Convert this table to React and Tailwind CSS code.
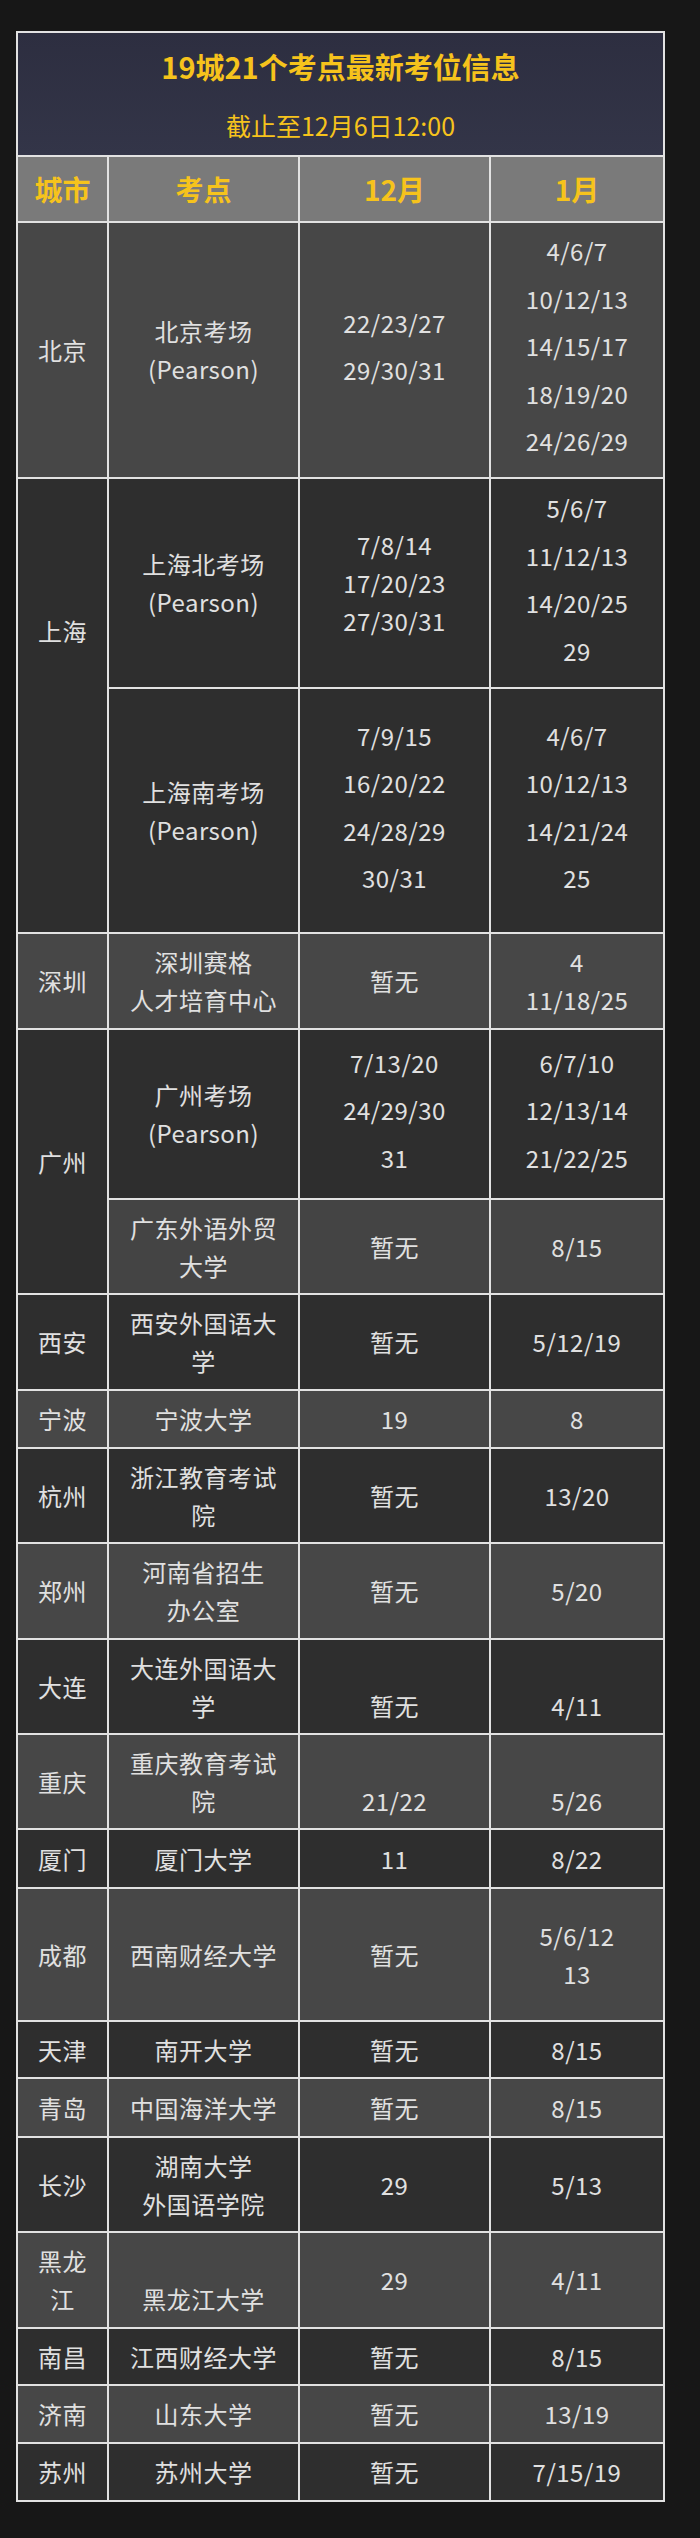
import React from "react";

const DARK = "bg-[#2e2e2e]";
const LIGHT = "bg-[#474747]";

// 每行: city (可选, 带 span), site / dec / jan 为多行文字
const rows = [
  {
    city: { lines: ["北京"], span: false },
    bg: LIGHT,
    site: ["北京考场", "(Pearson)"],
    dec: ["22/23/27", "29/30/31"],
    jan: ["4/6/7", "10/12/13", "14/15/17", "18/19/20", "24/26/29"],
    tall: true,
  },
  {
    city: { lines: ["上海"], span: true, top: true },
    bg: DARK,
    site: ["上海北考场", "(Pearson)"],
    dec: ["7/8/14", "17/20/23", "27/30/31"],
    jan: ["5/6/7", "11/12/13", "14/20/25", "29"],
    tallJan: true,
  },
  {
    bg: DARK,
    site: ["上海南考场", "(Pearson)"],
    dec: ["7/9/15", "16/20/22", "24/28/29", "30/31"],
    jan: ["4/6/7", "10/12/13", "14/21/24", "25"],
    tall: true,
  },
  { city: { lines: ["深圳"] }, bg: LIGHT, site: ["深圳赛格", "人才培育中心"], dec: ["暂无"], jan: ["4", "11/18/25"] },
  {
    city: { lines: ["广州"], span: true },
    cityBg: DARK,
    bg: DARK,
    site: ["广州考场", "(Pearson)"],
    dec: ["7/13/20", "24/29/30", "31"],
    jan: ["6/7/10", "12/13/14", "21/22/25"],
    tall: true,
  },
  { bg: "bg-[#444444]", site: ["广东外语外贸", "大学"], dec: ["暂无"], jan: ["8/15"] },
  { city: { lines: ["西安"] }, bg: DARK, site: ["西安外国语大", "学"], dec: ["暂无"], jan: ["5/12/19"] },
  { city: { lines: ["宁波"] }, bg: LIGHT, site: ["宁波大学"], dec: ["19"], jan: ["8"] },
  { city: { lines: ["杭州"] }, bg: DARK, site: ["浙江教育考试", "院"], dec: ["暂无"], jan: ["13/20"] },
  { city: { lines: ["郑州"] }, bg: LIGHT, site: ["河南省招生", "办公室"], dec: ["暂无"], jan: ["5/20"] },
  { city: { lines: ["大连"] }, bg: DARK, site: ["大连外国语大", "学"], dec: ["\u00a0", "暂无"], jan: ["\u00a0", "4/11"] },
  { city: { lines: ["重庆"] }, bg: LIGHT, site: ["重庆教育考试", "院"], dec: ["\u00a0", "21/22"], jan: ["\u00a0", "5/26"] },
  { city: { lines: ["厦门"] }, bg: DARK, site: ["厦门大学"], dec: ["11"], jan: ["8/22"] },
  { city: { lines: ["成都"] }, bg: LIGHT, site: ["西南财经大学"], dec: ["暂无"], jan: ["5/6/12", "13"] },
  { city: { lines: ["天津"] }, bg: DARK, site: ["南开大学"], dec: ["暂无"], jan: ["8/15"] },
  { city: { lines: ["青岛"] }, bg: LIGHT, site: ["中国海洋大学"], dec: ["暂无"], jan: ["8/15"] },
  { city: { lines: ["长沙"] }, bg: DARK, site: ["湖南大学", "外国语学院"], dec: ["29"], jan: ["5/13"] },
  { city: { lines: ["黑龙", "江"] }, bg: LIGHT, site: ["\u00a0", "黑龙江大学"], dec: ["29"], jan: ["4/11"] },
  { city: { lines: ["南昌"] }, bg: DARK, site: ["江西财经大学"], dec: ["暂无"], jan: ["8/15"] },
  { city: { lines: ["济南"] }, bg: LIGHT, site: ["山东大学"], dec: ["暂无"], jan: ["13/19"] },
  { city: { lines: ["苏州"] }, bg: DARK, site: ["苏州大学"], dec: ["暂无"], jan: ["7/15/19"] },
];

function Cell({ lines, bg, tall, className = "" }) {
  return (
    <div
      className={`${bg} flex flex-col items-center justify-center text-center ${tall ? "pb-[8px]" : ""} ${className}`}
    >
      {lines.map((l, i) => (
        <div key={i} className={tall ? "leading-[47.5px]" : "leading-[38px]"}>
          {l}
        </div>
      ))}
    </div>
  );
}

export default function App() {
  return (
    <div
      className="min-h-screen bg-[#171717] pt-[31px] pl-[16px]"
      style={{ fontFamily: '"Noto Sans CJK SC", "Noto Sans", sans-serif' }}
    >
      <div className="w-[649px] bg-[#e2e2e2] p-[2px] grid gap-[2px] grid-cols-[89px_189px_189px_172px] grid-rows-[122px_64px_254px_208px_243px_94px_168px_93px_94px_56px_93px_94px_93px_93px_57px_131px_55px_57px_93px_94px_55px_56px_56px] text-[24px] text-[#e0e0e0] tracking-[0.02em]">
        {/* 标题 */}
        <div className="col-span-4 bg-gradient-to-b from-[#2d2e40] to-[#333548] flex flex-col items-center pt-[19px] gap-[32px] text-[#f6c31c]">
          <div className="text-[29px] font-bold leading-none tracking-normal">19城21个考点最新考位信息</div>
          <div className="text-[25px] leading-none tracking-normal">截止至12月6日12:00</div>
        </div>

        {/* 表头 */}
        {["城市", "考点", "12月", "1月"].map((h) => (
          <div
            key={h}
            className="bg-[#7a7a7a] flex items-center justify-center text-[28px] font-bold text-[#f6c31c] tracking-normal"
          >
            {h}
          </div>
        ))}

        {rows.map((r, i) => (
          <React.Fragment key={i}>
            {r.city && (
              <Cell
                lines={r.city.lines}
                bg={r.cityBg || r.bg}
                className={`${r.city.span ? "row-span-2" : ""} ${r.city.top ? "!justify-start pt-[133px]" : ""}`}
              />
            )}
            <Cell lines={r.site} bg={r.bg} />
            <Cell lines={r.dec} bg={r.bg} tall={r.tall} />
            <Cell lines={r.jan} bg={r.bg} tall={r.tall || r.tallJan} />
          </React.Fragment>
        ))}
      </div>
    </div>
  );
}
